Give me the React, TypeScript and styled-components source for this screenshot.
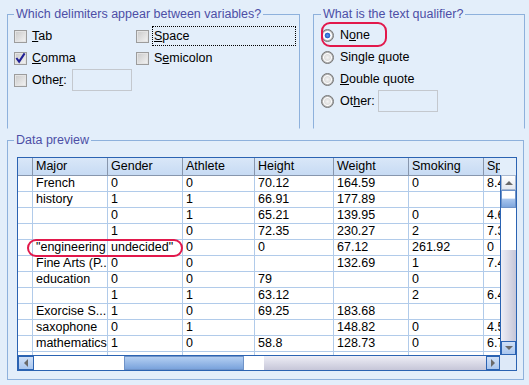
import styled, { createGlobalStyle } from "styled-components";

const GlobalStyle = createGlobalStyle`
  html, body { margin: 0; padding: 0; }
  body {
    background: #e3eefa;
    font-family: "Liberation Sans", Arial, sans-serif;
    font-size: 12.5px;
    color: #000;
  }
`;

const Page = styled.div`
  width: 529px;
  height: 385px;
  box-sizing: border-box;
  padding: 7px 0 0 7px;
  display: flex;
  flex-direction: column;
  gap: 6px;
  overflow: hidden;
`;

const TopRow = styled.div`
  display: flex;
  gap: 13px;
`;

const Group = styled.fieldset<{ $w: number; $h: number; $pad: string; $open?: boolean }>`
  margin: 0;
  min-width: 0;
  width: ${({ $w }) => $w}px;
  height: ${({ $h }) => $h}px;
  box-sizing: border-box;
  border: 1px solid #8eb1dc;
  ${({ $open }) => ($open ? "border-bottom-color: transparent;" : "")}
  padding: ${({ $pad }) => $pad};
`;

const Legend = styled.legend<{ $shift?: number }>`
  padding: 0 2px;
  margin-left: ${({ $shift }) => $shift ?? 0}px;
  color: #4d4ea6;
  font-size: 12.5px;
  line-height: 14px;
`;

const CheckGrid = styled.div`
  display: grid;
  grid-template-columns: 122px 1fr;
  grid-auto-rows: 22px;
`;

const RadioList = styled.div`
  display: grid;
  grid-auto-rows: 22px;
`;

const Option = styled.div`
  position: relative;
  display: flex;
  align-items: center;
  gap: 3px;
  white-space: nowrap;
`;

const Box = styled.span`
  flex: none;
  width: 13px;
  height: 13px;
  box-sizing: border-box;
  border: 1px solid #9c9c9c;
  background: linear-gradient(135deg, #c9c9c9, #f4f4f4);
  box-shadow: inset 0 0 0 1px #e4e4e4;
  display: flex;
  align-items: center;
  justify-content: center;
`;

const Radio = styled.span<{ $on?: boolean }>`
  flex: none;
  width: 13px;
  height: 13px;
  box-sizing: border-box;
  border-radius: 50%;
  border: 1px solid #767676;
  background: ${({ $on }) =>
    $on
      ? "radial-gradient(circle, #5b97ea 0, #2463c9 2.5px, #ffffff 3.2px, #ffffff 4px, #b5b5b5 5px)"
      : "radial-gradient(circle, #f4f4f4 0, #dedede 3px, #ffffff 4px, #b5b5b5 5px)"};
  margin-right: 1px;
`;

const Caption = styled.span<{ $focus?: boolean }>`
  flex: ${({ $focus }) => ($focus ? 1 : "none")};
  border: 1px dotted ${({ $focus }) => ($focus ? "#000" : "transparent")};
  padding: 1px 1px;
  line-height: 16px;
`;

const TextBox = styled.span<{ $gap: number }>`
  flex: none;
  width: 60px;
  height: 22px;
  box-sizing: border-box;
  border: 1px solid #c4c8ce;
  margin-left: ${({ $gap }) => $gap}px;
`;

const Ring = styled.span`
  position: absolute;
  left: 0;
  top: -2px;
  width: 66px;
  height: 25px;
  box-sizing: border-box;
  border: 2px solid #e2184b;
  border-radius: 9px;
  pointer-events: none;
`;

const Frame = styled.div`
  width: 500px;
  height: 214px;
  box-sizing: border-box;
  border: 1px solid #2b63b2;
  display: grid;
  grid-template-columns: 482px 16px;
  grid-template-rows: 197px 15px;
  background: #e3eefa;
`;

const Viewport = styled.div`
  position: relative;
  overflow: hidden;
  background: #fff;
`;

const Row = styled.div<{ $head?: boolean }>`
  display: grid;
  grid-template-columns: 15px 75px 75px 72px 79px 75px 75px 75px;
  height: ${({ $head }) => ($head ? 18 : 16)}px;
  background: ${({ $head }) =>
    $head ? "linear-gradient(#d9e7f8, #c6daf3)" : "#fff"};
`;

const Cell = styled.div<{ $head?: boolean }>`
  box-sizing: border-box;
  border-right: 1px solid ${({ $head }) => ($head ? "#8796ad" : "#b1cbea")};
  border-bottom: 1px solid ${({ $head }) => ($head ? "#8796ad" : "#b1cbea")};
  padding: 0 3px;
  font-size: 12.5px;
  line-height: ${({ $head }) => ($head ? 17 : 15)}px;
  white-space: nowrap;
  overflow: hidden;
`;

const CellRing = styled.span`
  position: absolute;
  left: 9px;
  top: 81px;
  width: 156px;
  height: 18px;
  box-sizing: border-box;
  border: 2px solid #e2184b;
  border-radius: 9px;
`;

const VBar = styled.div`
  margin-top: 17px;
  border-left: 1px solid #2b63b2;
  display: flex;
  flex-direction: column;
`;

const HBar = styled.div`
  border-top: 1px solid #2b63b2;
  display: flex;
`;

const Corner = styled.div`
  background: #dde9f8;
`;

const ArrowButton = styled.div<{ $hot?: boolean; $w: number; $h: number }>`
  flex: none;
  width: ${({ $w }) => $w}px;
  height: ${({ $h }) => $h}px;
  box-sizing: border-box;
  display: flex;
  align-items: center;
  justify-content: center;
  background: ${({ $hot }) =>
    $hot ? "linear-gradient(#cfe0f7, #a9c6ee)" : "linear-gradient(#ffffff, #e4e8f0)"};
  border: 1px solid ${({ $hot }) => ($hot ? "#2b63b2" : "#a8b8d0")};
`;

const Tri = styled.span<{ $dir: "up" | "down" | "left" | "right" }>`
  width: 0;
  height: 0;
  border: 4px solid transparent;
  ${({ $dir }) =>
    $dir === "up"
      ? "border-bottom-color: #6a6a6a; border-top-width: 0;"
      : $dir === "down"
      ? "border-top-color: #6a6a6a; border-bottom-width: 0;"
      : $dir === "left"
      ? "border-right-color: #6a6a6a; border-left-width: 0;"
      : "border-left-color: #6a6a6a; border-right-width: 0;"}
`;

const Track = styled.div<{ $size?: number; $tone: "white" | "gray" | "thumb"; $vertical?: boolean }>`
  flex: ${({ $size }) => ($size ? `0 0 ${$size}px` : "1")};
  box-sizing: border-box;
  background: ${({ $tone, $vertical }) =>
    $tone === "white"
      ? "#fff"
      : $tone === "gray"
      ? $vertical
        ? "linear-gradient(to right, #eeeef6, #c6c6d8)"
        : "linear-gradient(#eeeef6, #c6c6d8)"
      : $vertical
      ? "linear-gradient(#ffffff 0, #ffffff 45%, #a9c6ee 50%, #7ea6dd 100%)"
      : "linear-gradient(#b4cff2, #7aa3dc)"};
  ${({ $tone }) => ($tone === "thumb" ? "border: 1px solid #6f93c8;" : "")}
`;

const Check = () => (
  <svg width="12" height="12" viewBox="0 0 12 12">
    <path d="M1.5 6 L4.5 10 L10.5 1" fill="none" stroke="#1f1f95" strokeWidth="2.2" />
  </svg>
);

const columns = ["Major", "Gender", "Athlete", "Height", "Weight", "Smoking", "Sp"];

const rows: string[][] = [
  ["French", "0", "0", "70.12", "164.59", "0", "8.4"],
  ["history", "1", "1", "66.91", "177.89", "", ""],
  ["", "0", "1", "65.21", "139.95", "0", "4.6"],
  ["", "1", "0", "72.35", "230.27", "2", "7.3"],
  ['"engineering', 'undecided"', "0", "0", "67.12", "261.92", "0"],
  ["Fine Arts (P...", "0", "0", "", "132.69", "1", "7.4"],
  ["education", "0", "0", "79", "", "0", ""],
  ["", "1", "1", "63.12", "", "2", "6.4"],
  ["Exorcise S...", "1", "0", "69.25", "183.68", "", ""],
  ["saxophone", "0", "1", "", "148.82", "0", "4.5"],
  ["mathematics", "1", "0", "58.8", "128.73", "0", "6.7"],
  ["", "", "", "", "", "", ""],
];

export default function App() {
  return (
    <>
      <GlobalStyle />
      <Page>
        <TopRow>
          <Group $w={293} $h={122} $pad="4px 3px 0 6px" $open>
            <Legend>Which delimiters appear between variables?</Legend>
            <CheckGrid>
              <Option>
                <Box />
                <Caption><u>T</u>ab</Caption>
              </Option>
              <Option>
                <Box />
                <Caption $focus><u>S</u>pace</Caption>
              </Option>
              <Option>
                <Box><Check /></Box>
                <Caption><u>C</u>omma</Caption>
              </Option>
              <Option>
                <Box />
                <Caption>S<u>e</u>micolon</Caption>
              </Option>
              <Option>
                <Box />
                <Caption>Othe<u>r</u>:</Caption>
                <TextBox $gap={0} />
              </Option>
            </CheckGrid>
          </Group>
          <Group $w={212} $h={122} $pad="3px 3px 0 7px" $open>
            <Legend>What is the text qualifier?</Legend>
            <RadioList>
              <Option>
                <Radio $on />
                <Caption>N<u>o</u>ne</Caption>
                <Ring />
              </Option>
              <Option>
                <Radio />
                <Caption>Single <u>q</u>uote</Caption>
              </Option>
              <Option>
                <Radio />
                <Caption><u>D</u>ouble quote</Caption>
              </Option>
              <Option>
                <Radio />
                <Caption>Ot<u>h</u>er:</Caption>
                <TextBox $gap={-2} />
              </Option>
            </RadioList>
          </Group>
        </TopRow>
        <Group $w={517} $h={247} $pad="10px 7px 9px 9px" style={{ marginTop: -2 }}>
          <Legend $shift={-3}>Data preview</Legend>
          <Frame>
            <Viewport>
              <Row $head>
                <Cell $head />
                {columns.map((c) => (
                  <Cell $head key={c}>{c}</Cell>
                ))}
              </Row>
              {rows.map((r, i) => (
                <Row key={i}>
                  <Cell />
                  {r.map((v, j) => (
                    <Cell key={j}>{v}</Cell>
                  ))}
                </Row>
              ))}
              <CellRing />
            </Viewport>
            <VBar>
              <ArrowButton $w={15} $h={15}>
                <Tri $dir="up" />
              </ArrowButton>
              <Track $vertical $tone="thumb" $size={18} />
              <Track $vertical $tone="white" $size={42} />
              <Track $vertical $tone="gray" />
              <ArrowButton $hot $w={15} $h={14}>
                <Tri $dir="down" />
              </ArrowButton>
            </VBar>
            <HBar>
              <ArrowButton $hot $w={16} $h={14}>
                <Tri $dir="left" />
              </ArrowButton>
              <Track $tone="white" $size={90} />
              <Track $tone="thumb" $size={120} />
              <Track $tone="white" $size={20} />
              <Track $tone="gray" />
              <ArrowButton $hot $w={14} $h={14}>
                <Tri $dir="right" />
              </ArrowButton>
            </HBar>
            <Corner />
          </Frame>
        </Group>
      </Page>
    </>
  );
}
